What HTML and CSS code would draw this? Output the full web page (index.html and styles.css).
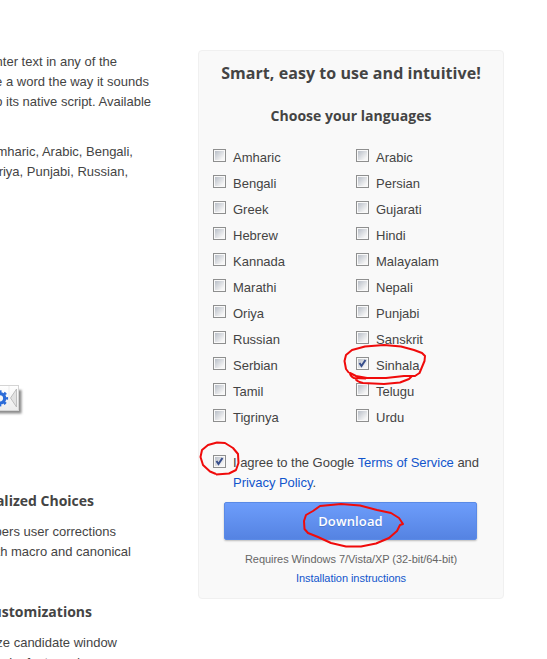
FILE: index.html
```html
<!DOCTYPE html>
<html lang="en">
<head>
  <meta charset="utf-8">
  <title>Google Input Tools</title>
  <link rel="stylesheet" href="styles.css">
</head>
<body>

<div class="page">
  <div class="main">
    <div class="intro">
      <p class="line end-117">nter text in any of the</p>
      <p class="line end-149">e a word the way it sounds</p>
      <p class="line end-151">o its native script. Available</p>
    </div>
    <div class="intro-langs">
      <p class="line end-133">mharic, Arabic, Bengali,</p>
      <p class="line end-128">riya, Punjabi, Russian,</p>
    </div>

    <svg class="toolbar" width="24" height="32" viewBox="0 0 24 32">
      <defs>
        <linearGradient id="bar" x1="0" y1="0" x2="0" y2="1">
          <stop offset="0" stop-color="#fff"/>
          <stop offset="1" stop-color="#ececec"/>
        </linearGradient>
        <filter id="soft"><feGaussianBlur stdDeviation=".8"/></filter>
      </defs>
      <rect x="-5" y="5" width="26.500" height="23.500" fill="#8c8c8c" filter="url(#soft)"/>
      <rect x="-5" y="0.5" width="23.5" height="25" fill="url(#bar)" stroke="#d4d4d4"/>
      <path d="M9 1V25" stroke="#ececec"/>
      <circle cx="0" cy="13.3" r="4.7" fill="none" stroke="#2b6bd8" stroke-width="3.2"/>
      <circle cx="0" cy="13.3" r="6.7" fill="none" stroke="#2b6bd8" stroke-width="2.8" stroke-dasharray="2.63 2.63" stroke-dashoffset="1.31"/>
      <path d="M16.5 4L10.5 13L16.5 22Z" fill="#e2e2e2" stroke="#b4b4b4" stroke-width=".8"/>
    </svg>

    <div class="feature">
      <h3 class="line end-94">alized Choices</h3>
      <p class="line end-116">bers user corrections</p>
      <p class="line end-131">th macro and canonical</p>
    </div>
    <div class="feature">
      <h3 class="line end-92">ustomizations</h3>
      <p class="line end-117">ize candidate window</p>
      <p class="line end-80">le, fonts and</p>
    </div>
  </div>

  <div class="panel">
    <h1>Smart, easy to use and intuitive!</h1>
    <h2>Choose your languages</h2>

    <div class="languages">
      <label><input type="checkbox">Amharic</label>
      <label><input type="checkbox">Arabic</label>
      <label><input type="checkbox">Bengali</label>
      <label><input type="checkbox">Persian</label>
      <label><input type="checkbox">Greek</label>
      <label><input type="checkbox">Gujarati</label>
      <label><input type="checkbox">Hebrew</label>
      <label><input type="checkbox">Hindi</label>
      <label><input type="checkbox">Kannada</label>
      <label><input type="checkbox">Malayalam</label>
      <label><input type="checkbox">Marathi</label>
      <label><input type="checkbox">Nepali</label>
      <label><input type="checkbox">Oriya</label>
      <label><input type="checkbox">Punjabi</label>
      <label><input type="checkbox">Russian</label>
      <label><input type="checkbox">Sanskrit</label>
      <label><input type="checkbox">Serbian</label>
      <label><input type="checkbox" checked>Sinhala</label>
      <label><input type="checkbox">Tamil</label>
      <label><input type="checkbox">Telugu</label>
      <label><input type="checkbox">Tigrinya</label>
      <label><input type="checkbox">Urdu</label>
    </div>

    <label class="agree">
      <input type="checkbox" checked>
      <span>I agree to the Google <a href="#">Terms of Service</a> and<br><a href="#">Privacy Policy</a>.</span>
    </label>

    <button class="download">Download</button>
    <p class="note">Requires Windows 7/Vista/XP (32-bit/64-bit)</p>
    <p class="note"><a href="#">Installation instructions</a></p>
  </div>

  <!-- red pen marks -->
  <svg class="marks" width="547" height="659" viewBox="0 0 547 659">
    <path d="M349 373L346 369L344.500 361L346 355L352 350L365 346.500L384 345L401 346.500L414 350L422 353L425 356L424.500 361L422 367L419.500 373L415 376L404 376L386 378L367 378L356 376L350 373Q350 376 354 378L366 378.500M355 378Q357 382 363 383L384 384L400 382.500L409 379L412 376"/>
    <path d="M216 474L210 471.500L203 465L200.500 457L202 450L208 445L217 442.500L225 443L233 448L238 454L238.500 463L236 470L229 473.500L216 474.500"/>
    <path d="M403 524L399 518L391 513L377 510L360 505.500L341 504L320 506L313 511L306 515L304 521L304.500 529L308 533L318 537L331 543L346 546.500L361 546.500L376 543.500L389 538L397 531L400 525Z"/>
  </svg>
</div>

</body>
</html>
```

FILE: styles.css
```css
body {
  margin: 0;
  background: #fff;
  color: #444;
  font-family: "Liberation Sans", Arial, sans-serif;
  font-size: 13px;
  line-height: 20px;
}

h1, h2, h3, p {
  margin: 0;
}

h1, h2, h3 {
  font-family: "Open Sans", sans-serif;
  font-weight: 700;
}

a {
  color: #15c;
  text-decoration: none;
}

.page {
  position: relative;
  display: flex;
  width: 547px;
  height: 659px;
  overflow: hidden;
}

/* left column runs off the window edge */
.main {
  width: 198px;
  padding-top: 52px;
}

.line {
  display: flex;
  justify-content: flex-end;
  white-space: nowrap;
}

.end-80 { width: 80px; }
.end-92 { width: 92px; }
.end-94 { width: 94px; }
.end-116 { width: 116px; }
.end-117 { width: 117px; }
.end-128 { width: 128px; }
.end-131 { width: 131px; }
.end-133 { width: 133px; }
.end-149 { width: 149px; }
.end-151 { width: 151px; }

.intro {
  margin-bottom: 30px;
}

.toolbar {
  display: block;
  margin: 203px 0 74px;
}

.feature {
  margin-bottom: 40px;
}

.feature h3 {
  font-size: 14px;
  margin-bottom: 11px;
}

.panel {
  box-sizing: border-box;
  width: 306px;
  height: 549px;
  margin-top: 50px;
  padding: 12px 14px 0;
  background: #f9f9f9;
  border: 1px solid #f0f0f0;
  border-radius: 4px;
}

.panel h1 {
  font-size: 16px;
  letter-spacing: .06px;
  text-align: center;
}

.panel h2 {
  margin: 23px 0 19px;
  font-size: 14px;
  text-align: center;
}

.languages {
  display: grid;
  grid-template-columns: 143px 1fr;
  grid-auto-rows: 26px;
}

.languages label {
  display: flex;
  line-height: 26px;
}

input {
  appearance: none;
  box-sizing: border-box;
  flex: none;
  width: 13px;
  height: 13px;
  margin: 4px 7px 0 0;
  border: 1px solid #8e8f8f;
  background: linear-gradient(135deg, #b9bfc8, #f6f6f6 85%) content-box #f4f4f4;
  padding: 1px;
}

input:checked {
  background: url("data:image/svg+xml,%3Csvg xmlns='http://www.w3.org/2000/svg' viewBox='0 0 11 11'%3E%3Cpath d='M2.500 5L4.500 8L8.500 2' fill='none' stroke='%23384f8c' stroke-width='2'/%3E%3C/svg%3E") center / 11px 11px no-repeat, linear-gradient(135deg, #b9bfc8, #f6f6f6 85%) content-box #f4f4f4;
}

.agree {
  display: flex;
  margin-top: 22px;
  letter-spacing: -.04px;
}

.agree input {
  margin-top: 2px;
}

.download {
  display: block;
  width: 253px;
  height: 38px;
  margin: 9px 0 10px 11px;
  padding: 0;
  border: 1px solid #5a8ae6;
  border-radius: 2px;
  background: linear-gradient(#6d9dfb, #5583e2);
  box-shadow: 0 1px 2px rgba(0, 0, 0, .25);
  color: #fff;
  font-family: "Open Sans", sans-serif;
  font-size: 13px;
  font-weight: 600;
  letter-spacing: .15px;
  text-shadow: 0 1px rgba(0, 0, 0, .15);
}

.note {
  color: #666;
  font-size: 11px;
  letter-spacing: -.05px;
  line-height: 19px;
  text-align: center;
}

.marks {
  position: absolute;
  top: 0;
  left: 0;
  fill: none;
  stroke: #f00b0b;
  stroke-width: 2;
  stroke-linejoin: round;
  pointer-events: none;
}
```
